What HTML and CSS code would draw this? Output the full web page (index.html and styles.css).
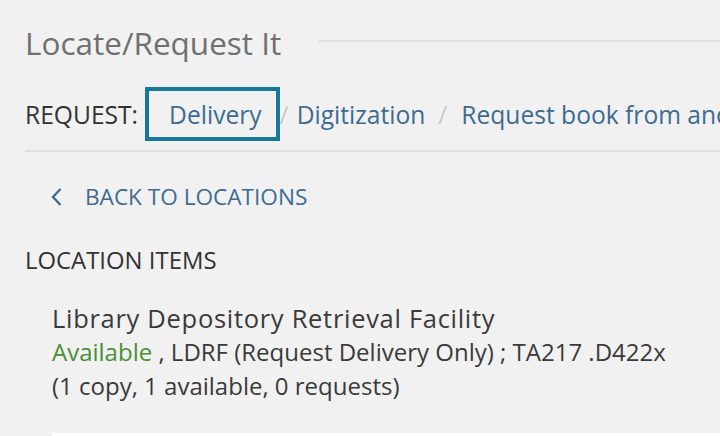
FILE: index.html
```html
<!DOCTYPE html>
<html lang="en">
<head>
    <meta charset="UTF-8">
    <meta name="viewport" content="width=device-width, initial-scale=1.0">
    <title>Locate/Request It</title>
    <link rel="stylesheet" href="styles.css">
</head>
<body>
    <main class="request-panel">
        <div class="section-title">
            <h2 class="section-heading">Locate/Request It</h2>
            <span class="section-rule"></span>
        </div>

        <nav class="request-tabs">
            <span class="request-label">REQUEST:</span>
            <a href="#" class="request-link is-active">Delivery</a>
            <span class="request-sep">/</span>
            <a href="#" class="request-link">Digitization</a>
            <span class="request-sep">/</span>
            <a href="#" class="request-link">Request book from another library</a>
        </nav>

        <div class="location-body">
            <a href="#" class="back-link">
                <svg class="back-icon" viewBox="0 0 13 20" width="13" height="20">
                    <path d="M10.5 2 L3 10 L10.5 18" fill="none" stroke="currentColor" stroke-width="2.4"/>
                </svg>
                <span>BACK TO LOCATIONS</span>
            </a>

            <h3 class="items-heading">LOCATION ITEMS</h3>

            <div class="location-item">
                <div class="item-name">Library Depository Retrieval Facility</div>
                <div class="item-status"><span class="status-available">Available</span> , LDRF (Request Delivery Only) ; TA217 .D422x</div>
                <div class="item-count">(1 copy, 1 available, 0 requests)</div>
            </div>

            <div class="item-card"></div>
        </div>
    </main>
</body>
</html>
```

FILE: styles.css
```css
:root {
    --background: #f1f1f1;
    --foreground: #3a3a3a;
    --muted: #707070;
    --link: #3d6b94;
    --focus: #16789b;
    --rule: #dedede;
    --green: #4b8f35;
}

* {
    margin: 0;
    padding: 0;
    box-sizing: border-box;
}

body {
    font-family: 'Open Sans', 'Lato', sans-serif;
    color: var(--foreground);
    background-color: var(--background);
    overflow: hidden;
}

.request-panel {
    padding: 22px 0 0 25px;
}

.section-title {
    display: flex;
    height: 42px;
}

.section-heading {
    font-size: 31.5px;
    line-height: 42px;
    font-weight: 400;
    color: var(--muted);
    white-space: nowrap;
}

.section-rule {
    flex: 1;
    height: 2px;
    margin: 18px 0 0 38px;
    background-color: var(--rule);
}

.request-tabs {
    display: flex;
    align-items: center;
    height: 54px;
    margin-top: 23px;
    font-size: 24.6px;
    white-space: nowrap;
    overflow: hidden;
    border-bottom: 2px solid var(--rule);
    box-sizing: content-box;
    padding-bottom: 9px;
}

.request-label {
    margin-right: 7px;
    color: #333333;
}

.request-link {
    color: var(--link);
    text-decoration: none;
}

.request-link.is-active {
    display: flex;
    align-items: center;
    height: 54px;
    padding: 0 14px 0 20px;
    border: 4px solid var(--focus);
}

.request-sep {
    color: #c8c8c8;
    margin: 0 14px 0 13px;
}

.is-active + .request-sep {
    margin: 0 8px 0 0;
}

.location-body {
    padding-top: 32px;
}

.back-link {
    display: flex;
    align-items: center;
    gap: 22px;
    padding-left: 25px;
    font-size: 22.6px;
    line-height: 26px;
    color: var(--link);
    text-decoration: none;
}

.back-icon {
    display: block;
}

.items-heading {
    margin-top: 37px;
    font-size: 23.9px;
    line-height: 26px;
    font-weight: 400;
    color: #333333;
}

.location-item {
    padding: 28px 0 0 27px;
    font-size: 24px;
    line-height: 34px;
    white-space: nowrap;
}

.item-name {
    font-size: 25.5px;
    letter-spacing: 0.7px;
}

.status-available {
    color: var(--green);
}

.item-card {
    height: 40px;
    margin: 30px 0 0 27px;
    background-color: #ffffff;
}
```
